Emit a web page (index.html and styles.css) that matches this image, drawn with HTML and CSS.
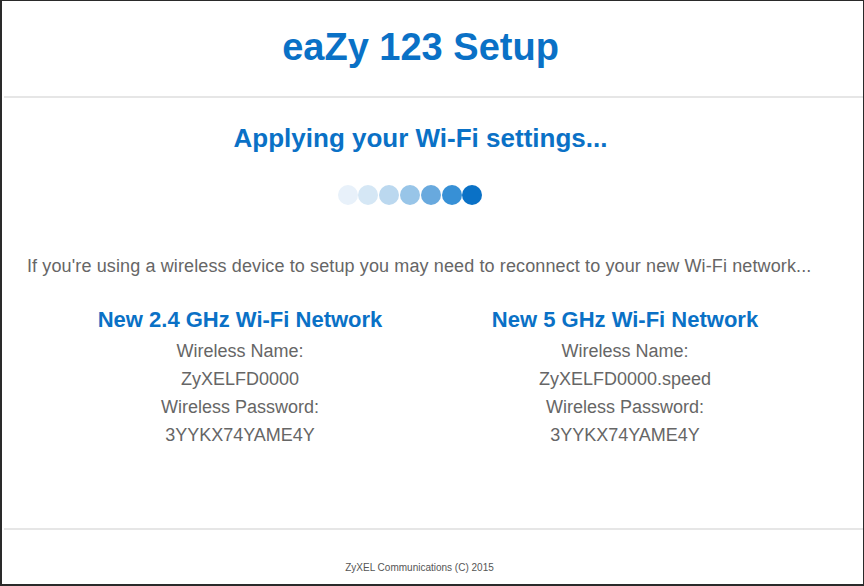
FILE: index.html
```html
<!DOCTYPE html>
<html>
<head>
<meta charset="utf-8">
<link rel="stylesheet" href="styles.css">
</head>
<body>
<div class="frame">
  <header class="header">
    <h1 class="title">eaZy 123 Setup</h1>
  </header>
  <div class="rule"></div>
  <main class="main">
    <h2 class="applying">Applying your Wi-Fi settings...</h2>
    <div class="dots">
      <span class="dot d1"></span><span class="dot d2"></span><span class="dot d3"></span><span class="dot d4"></span><span class="dot d5"></span><span class="dot d6"></span><span class="dot d7"></span>
    </div>
    <p class="note">If you're using a wireless device to setup you may need to reconnect to your new Wi-Fi network...</p>
    <div class="networks">
      <section class="net">
        <h3 class="net-title">New 2.4 GHz Wi-Fi Network</h3>
        <div class="line">Wireless Name:</div>
        <div class="line">ZyXELFD0000</div>
        <div class="line">Wireless Password:</div>
        <div class="line">3YYKX74YAME4Y</div>
      </section>
      <section class="net">
        <h3 class="net-title">New 5 GHz Wi-Fi Network</h3>
        <div class="line">Wireless Name:</div>
        <div class="line">ZyXELFD0000.speed</div>
        <div class="line">Wireless Password:</div>
        <div class="line">3YYKX74YAME4Y</div>
      </section>
    </div>
  </main>
  <div class="rule"></div>
  <footer class="footer">ZyXEL Communications (C) 2015</footer>
</div>
</body>
</html>
```
FILE: styles.css
```css
html, body {
  margin: 0;
  padding: 0;
  background: #ffffff;
}
body {
  font-family: "Liberation Sans", Arial, sans-serif;
  color: #666666;
}
.frame {
  width: 864px;
  height: 586px;
  box-sizing: border-box;
  border: 1px solid #2a2a2a;
  border-left-width: 2px;
  border-bottom-width: 2px;
  display: flex;
  flex-direction: column;
}
.header {
  height: 95px;
  display: flex;
  align-items: center;
  justify-content: center;
  padding-right: 24px;
  box-sizing: border-box;
  padding-bottom: 4px;
}
.title {
  margin: 0;
  font-size: 38px;
  line-height: 38px;
  font-weight: bold;
  color: #0a71c6;
}
.rule {
  height: 2px;
  background: #e6e6e6;
  margin: 0 0 0 2px;
}
.main {
  height: 430px;
  padding: 26px 25px 0 25px;
  box-sizing: border-box;
}
.applying {
  margin: 0;
  padding-right: 24px;
  text-align: center;
  font-size: 26px;
  line-height: 28px;
  font-weight: bold;
  color: #0a71c6;
}
.dots {
  margin-top: 33px;
  display: flex;
  justify-content: center;
  height: 20px;
  padding-right: 45px;
}
.dot {
  width: 20px;
  height: 20px;
  border-radius: 50%;
  margin: 0 0.4px;
}
.d1 { background: #e8f1fa; }
.d2 { background: #d5e7f5; }
.d3 { background: #bbd8ef; }
.d4 { background: #98c5e8; }
.d5 { background: #68a9de; }
.d6 { background: #3790d6; }
.d7 { background: #0a71c6; }
.note {
  margin: 51px 0 0 0;
  font-size: 18px;
  line-height: 20px;
  letter-spacing: 0.12px;
}
.networks {
  width: 770px;
  margin: 30px auto 0 auto;
  display: grid;
  grid-template-columns: 1fr 1fr;
}
.net {
  text-align: center;
}
.net-title {
  margin: 0 0 3px 0;
  font-size: 22px;
  line-height: 28px;
  font-weight: bold;
  color: #0a71c6;
}
.line {
  font-size: 18px;
  line-height: 28px;
}
.footer {
  height: 54px;
  box-sizing: border-box;
  padding: 31px 26px 0 0;
  text-align: center;
  font-size: 10px;
  line-height: 14px;
  color: #555555;
}
```
